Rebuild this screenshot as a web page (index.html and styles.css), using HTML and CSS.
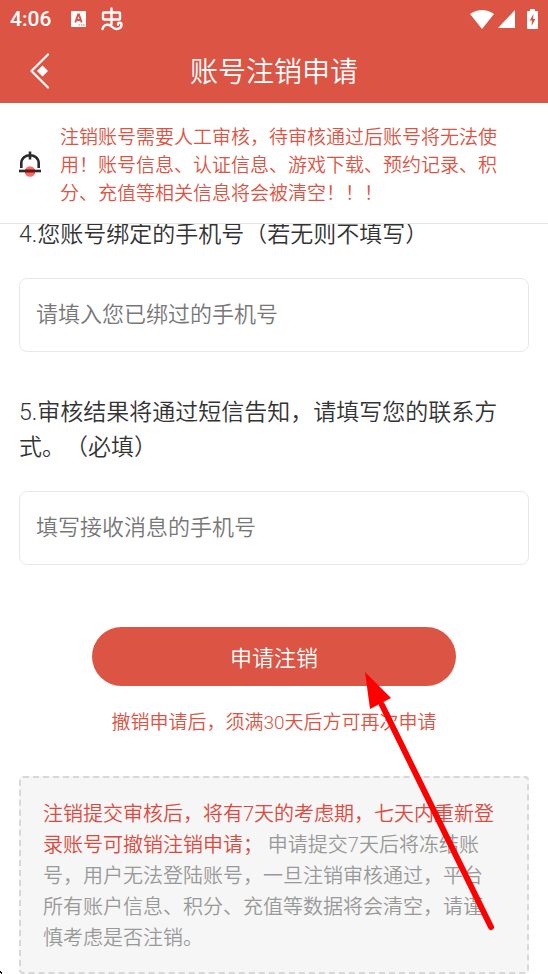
FILE: index.html
```html
<!DOCTYPE html>
<html lang="zh-CN">
<head>
<meta charset="utf-8">
<meta name="viewport" content="width=device-width, initial-scale=1">
<title>账号注销申请</title>
<link rel="stylesheet" href="styles.css">
</head>
<body>
<header class="top">
  <div class="status">
    <span class="time">4:06</span>
    <svg class="status-app" width="15" height="16" viewBox="0 0 15 16" aria-hidden="true">
      <rect width="15" height="16" rx="1" fill="#fff"/>
      <path d="M4.300 11.500 7.100 3.500h.8L10.700 11.500M5.500 9h4" fill="none" stroke="#db5444" stroke-width="1.900"/>
      <path d="M7.500 14h1.300M10 14h1.300M12.300 14h1.300" stroke="#db5444" stroke-width="1.200"/>
    </svg>
    <svg class="status-bug" width="22" height="24" viewBox="0 0 22 24" fill="none" stroke="#fff" stroke-width="2.400" stroke-linecap="round" stroke-linejoin="round" aria-hidden="true">
      <path d="M10.500 1.500V17M3 5.500h15q1 0 1 1v5q0 1-1 1H3.500q-1.500 0-1.500-1.500V6.500q0-1 1-1Z"/>
      <path d="M1.500 22c.8-3.500 3.500-5 7-4 3 1 3.500 4.500 7.500 4 2.500-.3 4.500-2 4.500-4.500 0-2.500-3.500-2.500-3.500 0"/>
    </svg>
    <span class="spacer"></span>
    <svg class="wifi" width="24" height="19" viewBox="0 0 24 19" aria-hidden="true"><path d="M0 4Q12-4 24 4L12 19Z" fill="#fff"/></svg>
    <svg class="signal" width="17" height="18" viewBox="0 0 17 18" aria-hidden="true"><path d="M17 0V18H0Z" fill="#fff"/></svg>
    <svg class="battery" width="11" height="20" viewBox="0 0 11 20" aria-hidden="true">
      <path d="M3 0h5v2h2q1 0 1 1v16q0 1-1 1H1q-1 0-1-1V3q0-1 1-1h2Z" fill="#fff"/>
      <path d="M6.500 5 2.700 11.500h2.300L4.500 17l3.800-7H6Z" fill="#db5444"/>
    </svg>
  </div>
  <div class="bar">
    <button class="back" type="button" aria-label="返回">
      <svg width="20" height="36" viewBox="0 0 20 36" aria-hidden="true">
        <path d="M18 1.500 1.500 18 18 34.500" fill="none" stroke="#fff" stroke-width="2.200" stroke-linecap="round" stroke-linejoin="round"/>
        <path d="M12.500 12.500 18 18l-5.500 5.500L7 18Z" fill="#fff"/>
      </svg>
    </button>
    <h1 class="title">账号注销申请</h1>
  </div>
</header>

<section class="notice">
  <svg class="bell" width="22" height="26" viewBox="0 0 22 26" aria-hidden="true">
    <circle cx="11" cy="20.500" r="5.300" fill="#fb6a66"/>
    <g fill="none" stroke="#2d2a2c" stroke-width="2.600">
      <path d="M2.300 17V12.500C2.300 1.500 19.700 1.500 19.700 12.500V17M11 .5V8.500"/>
      <path d="M0 20h22"/>
    </g>
    <path d="M6 20h10" stroke="#6d1713" stroke-width="2.600"/>
  </svg>
  <p class="notice-text">注销账号需要人工审核，待审核通过后账号将无法使用！账号信息、认证信息、游戏下载、预约记录、积分、充值等相关信息将会被清空！！！</p>
</section>

<main class="content">
  <form class="form">
    <div class="field">
      <label for="bound">4.您账号绑定的手机号（若无则不填写）</label>
      <input id="bound" type="tel" placeholder="请填入您已绑过的手机号">
    </div>
    <div class="field">
      <label for="contact">5.审核结果将通过短信告知，请填写您的联系方式。（必填）</label>
      <input id="contact" type="tel" placeholder="填写接收消息的手机号">
    </div>
    <button class="submit" type="submit">申请注销</button>
    <p class="hint">撤销申请后，须满30天后方可再次申请</p>
  </form>
  <p class="terms"><strong>注销提交审核后，将有7天的考虑期，七天内重新登录账号可撤销注销申请；</strong> 申请提交7天后将冻结账号，用户无法登陆账号，一旦注销审核通过，平台所有账户信息、积分、充值等数据将会清空，请谨慎考虑是否注销。</p>
  <svg class="pointer" width="132" height="262" viewBox="0 0 132 262" aria-hidden="true">
    <path d="M18 34 127 256" stroke="#fe0000" stroke-width="6" stroke-linecap="round"/>
    <path d="M1 1 27 27 6 38Z" fill="#fe0000"/>
  </svg>
  <svg class="corner" width="2" height="3" viewBox="0 0 2 3" aria-hidden="true"><path d="M0 0h1v1h1v2H1V2H0Z" fill="#111"/></svg>
</main>
</body>
</html>
```
FILE: styles.css
```css
* {
  box-sizing: border-box;
}

body {
  margin: 0;
  min-height: 100vh;
  overflow-x: hidden;
  background: #fff;
  color: #333;
  font-family: Roboto, "Noto Sans CJK SC", sans-serif;
  font-weight: 350;
  text-spacing-trim: space-all;
}

h1,
p {
  margin: 0;
}

.top {
  background: #db5444;
  color: #fff;
}

.status {
  display: flex;
  align-items: center;
  height: 38px;
  padding: 0 10px;
}

.time {
  font-size: 21px;
  font-weight: 500;
  line-height: 24px;
}

.status-app {
  margin-left: 20px;
}

.status-bug {
  margin-left: 15px;
}

.spacer {
  flex: 1;
}

.signal {
  margin-left: 4px;
}

.battery {
  margin-left: 12px;
}

.bar {
  display: grid;
  grid-template-columns: 60px 1fr 60px;
  align-items: center;
  height: 65px;
}

.back {
  display: flex;
  justify-content: flex-end;
  padding: 0 10px 0 0;
  border: 0;
  background: none;
}

.title {
  padding-top: 4px;
  font-size: 28px;
  font-weight: 350;
  line-height: 40px;
  text-align: center;
}

.notice {
  display: flex;
  align-items: center;
  gap: 19px;
  padding: 21px 48px 15px 19px;
  border-bottom: 1px solid #e4e4e4;
}

.bell {
  flex: none;
  margin-bottom: 4px;
}

.notice-text {
  color: #db5444;
  font-size: 19px;
  line-height: 28px;
}

.content {
  position: relative;
  padding: 0 19px;
  overflow: hidden;
}

.form {
  display: flex;
  flex-direction: column;
  margin-top: -7px;
}

.field {
  display: flex;
  flex-direction: column;
  gap: 26px;
  margin-bottom: 43px;
}

.field label {
  font-size: 23px;
  line-height: 35px;
}

.field input {
  width: 100%;
  height: 74px;
  padding: 0 16px 2px;
  border: 1px solid #e8e8e8;
  border-radius: 8px;
  background: #fff;
  color: #333;
  font: inherit;
  font-size: 22px;
}

.field input::placeholder {
  color: #777;
  opacity: 1;
}

.submit {
  align-self: center;
  width: 364px;
  max-width: 100%;
  height: 59px;
  margin-top: 19px;
  padding: 0 0 2px;
  border: 0;
  border-radius: 30px;
  background: #db5444;
  color: #fff;
  font: inherit;
  font-size: 22px;
}

.hint {
  margin: 23px 0 39px;
  color: #db5444;
  font-size: 19px;
  line-height: 28px;
  text-align: center;
}

.terms {
  padding: 21px 32px 18px 22px;
  border: 2px dashed #d8d8d8;
  border-radius: 4px;
  background: #f6f6f6;
  color: #999;
  font-size: 20px;
  line-height: 31px;
}

.terms strong {
  color: #db4a40;
  font-weight: 350;
}

.pointer {
  position: absolute;
  top: 447px;
  right: 52px;
}

.corner {
  position: absolute;
  bottom: 0;
  left: 0;
}
```
